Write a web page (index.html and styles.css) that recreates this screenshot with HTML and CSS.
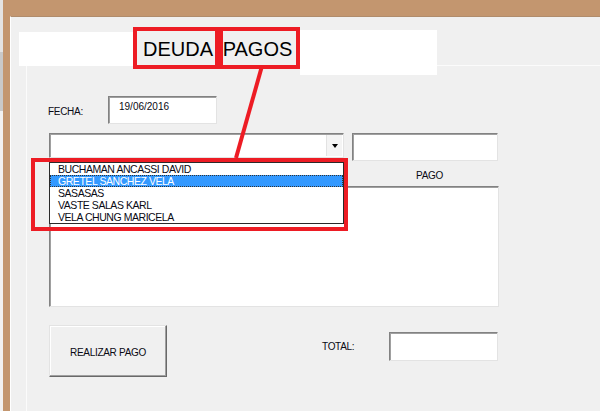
FILE: index.html
```html
<!DOCTYPE html>
<html lang="es">
<head>
    <meta charset="UTF-8">
    <meta name="viewport" content="width=device-width, initial-scale=1.0">
    <title>Pagos</title>
    <link rel="stylesheet" href="styles.css">
</head>
<body>
    <div class="excel-edge"></div>
    <div class="window">
        <div class="tabbar">
            <div class="patch patch-left"></div>
            <div class="tab tab-deuda">DEUDA</div>
            <div class="tab tab-pagos">PAGOS</div>
            <div class="patch patch-right"></div>
        </div>
        <div class="page">
            <div class="row-fecha">
                <label class="lbl-fecha">FECHA:</label>
                <div class="field field-date">19/06/2016</div>
            </div>
            <div class="row-combo">
                <div class="field combo">
                    <span class="combo-btn"><span class="arrow"></span></span>
                </div>
                <div class="field field-monto"></div>
            </div>
            <div class="list-head">
                <span class="head-pago">PAGO</span>
            </div>
            <div class="field listbox"></div>
            <div class="row-bottom">
                <button class="btn-pago" type="button">REALIZAR PAGO</button>
                <label class="lbl-total">TOTAL:</label>
                <div class="field field-total"></div>
            </div>

            <!-- desplegable abierto + marcas rojas -->
            <ul class="dropdown">
                <li>BUCHAMAN ANCASSI DAVID</li>
                <li class="selected">GRETEL SANCHEZ VELA</li>
                <li>SASASAS</li>
                <li>VASTE SALAS KARL</li>
                <li>VELA CHUNG MARICELA</li>
            </ul>
            <div class="red-box"></div>
            <svg class="red-line" width="60" height="100" viewBox="0 0 60 100">
                <line x1="36" y1="0" x2="10" y2="92" stroke="#ed1c24" stroke-width="4"/>
            </svg>
        </div>
    </div>
</body>
</html>
```

FILE: styles.css
```css
body {
    margin: 0;
    width: 600px;
    height: 411px;
    overflow: hidden;
    display: flex;
    background: #c3966f;
    font-family: "Liberation Sans", Arial, sans-serif;
    font-size: 10px;
    color: #0a0a14;
}

.excel-edge {
    width: 3px;
    background: linear-gradient(#e4e4e4 0 52px, #c9c9c9 52px 111px, #f2f2f2 111px);
}

.window {
    flex: 1;
    margin: 16px 0 0 7px;
    background: #f0f0f0;
    border-top: 1px solid #b08c6c;
    border-left: 1px solid #fff;
    display: flex;
    flex-direction: column;
}

/* tabs */
.tabbar {
    height: 48px;
    display: flex;
    align-items: flex-start;
    position: relative;
    z-index: 2;
}

.patch {
    background: #fff;
}

.patch-left {
    margin: 15px 0 0 8px;
    width: 114px;
    height: 34px;
}

.patch-right {
    margin-top: 13px;
    width: 137px;
    height: 45px;
}

.tab {
    margin-top: 10px;
    height: 42px;
    box-sizing: border-box;
    border: 4px solid #ed1c24;
    background: #f0f0f0;
    display: flex;
    align-items: center;
    justify-content: center;
    font-size: 20px;
    color: #000;
    padding-top: 2px;
}

.tab-deuda {
    width: 86px;
    padding-left: 4px;
}

.tab-pagos {
    width: 81px;
    padding-right: 4px;
}

/* page */
.page {
    flex: 1;
    margin-left: 15px;
    border-top: 1px solid #fbfbfb;
    border-left: 1px solid #fbfbfb;
    padding: 30px 0 0 22px;
    position: relative;
    letter-spacing: -0.3px;
}

.field {
    box-sizing: border-box;
    background: #fff;
    border: 1px solid;
    border-color: #828282 #e3e3e3 #e3e3e3 #828282;
    box-shadow: inset 1px 1px 0 #a0a0a0;
}

.row-fecha {
    display: flex;
    align-items: center;
    height: 28px;
}

.lbl-fecha {
    width: 60px;
    margin-left: -1px;
    padding-top: 2px;
}

.field-date {
    width: 109px;
    height: 28px;
    padding: 4px 0 0 10px;
    line-height: 12px;
    letter-spacing: 0;
}

.row-combo {
    margin-top: 9px;
    display: flex;
    gap: 8px;
    align-items: flex-start;
}

.combo {
    width: 295px;
    height: 25px;
    display: flex;
    justify-content: flex-end;
    padding: 1px 1px 1px 0;
}

.combo-btn {
    width: 15px;
    background: #f4f4f4;
    border-left: 1px solid #e2e2e2;
    display: flex;
    align-items: center;
    justify-content: center;
}

.arrow {
    width: 0;
    height: 0;
    border-left: 3px solid transparent;
    border-right: 3px solid transparent;
    border-top: 4px solid #000;
    margin-top: 1px;
}

.field-monto {
    width: 146px;
    height: 28px;
}

.list-head {
    height: 25px;
    display: flex;
}

.head-pago {
    margin-left: 303px;
    width: 147px;
    padding: 9px 0 0 8px;
    box-sizing: border-box;
    text-align: center;
    line-height: 12px;
}

.listbox {
    width: 450px;
    height: 121px;
}

.row-bottom {
    margin-top: 18px;
    display: flex;
    align-items: flex-start;
}

.btn-pago {
    width: 118px;
    height: 52px;
    background: #f0f0f0;
    border: 1px solid;
    border-color: #e3e3e3 #696969 #696969 #e3e3e3;
    box-shadow: inset -1px -1px 0 #a0a0a0, inset 1px 1px 0 #fff;
    font: inherit;
    letter-spacing: -0.3px;
    color: inherit;
    padding: 2px 0 0;
}

.lbl-total {
    width: 67px;
    margin: 16px 0 0 155px;
    line-height: 12px;
}

.field-total {
    margin-top: 7px;
    width: 109px;
    height: 29px;
}

/* open dropdown list */
.dropdown {
    position: absolute;
    left: 22px;
    top: 96px;
    width: 295px;
    height: 62px;
    box-sizing: border-box;
    margin: 0;
    padding: 0;
    list-style: none;
    background: #fff;
    border: 1px solid #2a2a2a;
    z-index: 3;
    font-size: 10.5px;
    letter-spacing: -0.45px;
}

.dropdown li {
    height: 12px;
    line-height: 13px;
    padding-left: 8px;
}

.dropdown .selected {
    background: #3399ff;
    color: #fff;
    outline: 1px dotted #333;
    outline-offset: -1px;
}

.red-box {
    position: absolute;
    left: 4px;
    top: 92px;
    width: 317px;
    height: 73px;
    box-sizing: border-box;
    border: 4px solid #ed1c24;
    z-index: 4;
}

.red-line {
    position: absolute;
    left: 199px;
    top: 0;
    overflow: visible;
    z-index: 4;
}
```
